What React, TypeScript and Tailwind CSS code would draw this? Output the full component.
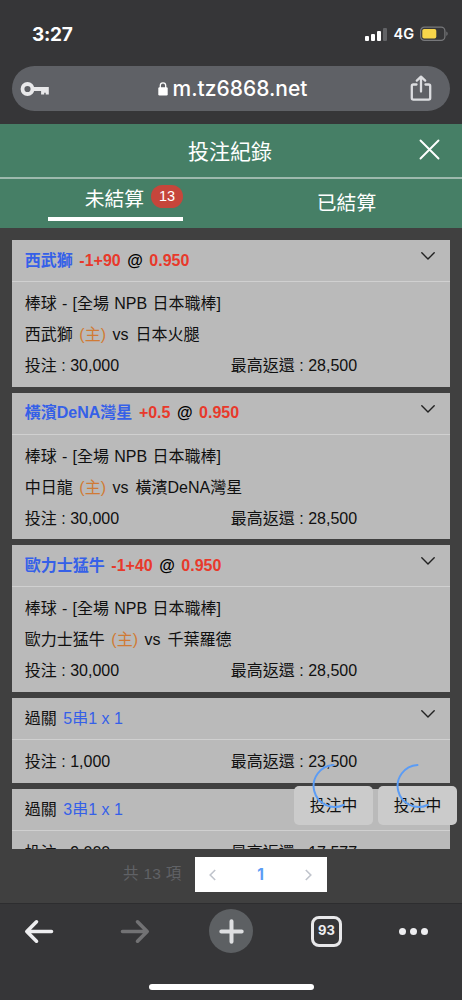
import type { ReactNode } from 'react';

type Bet = {
  id: number;
  team?: string;
  handicap?: string;
  odds?: string;
  parlay?: string;
  league?: string;
  home?: string;
  away?: string;
  stake: string;
  payout: string;
};

const bets: Bet[] = [
  {
    id: 1,
    team: '西武獅',
    handicap: '-1+90',
    odds: '0.950',
    league: '棒球 - [全場 NPB 日本職棒]',
    home: '西武獅',
    away: '日本火腿',
    stake: '30,000',
    payout: '28,500',
  },
  {
    id: 2,
    team: '橫濱DeNA灣星',
    handicap: '+0.5',
    odds: '0.950',
    league: '棒球 - [全場 NPB 日本職棒]',
    home: '中日龍',
    away: '橫濱DeNA灣星',
    stake: '30,000',
    payout: '28,500',
  },
  {
    id: 3,
    team: '歐力士猛牛',
    handicap: '-1+40',
    odds: '0.950',
    league: '棒球 - [全場 NPB 日本職棒]',
    home: '歐力士猛牛',
    away: '千葉羅德',
    stake: '30,000',
    payout: '28,500',
  },
  { id: 4, parlay: '5串1 x 1', stake: '1,000', payout: '23,500' },
  { id: 5, parlay: '3串1 x 1', stake: '9,000', payout: '17,577' },
];

function StatusBar() {
  return (
    <div className="flex h-[66px] items-center justify-between pl-8 pr-[14px] pt-[2px] text-white">
      <span className="font-['Inter'] text-[19px] font-bold leading-none tracking-[-0.3px]">3:27</span>
      <div className="flex items-center">
        <div className="mr-[6px] flex h-[14px] items-end gap-[2px]">
          <span className="h-[5px] w-[4px] rounded-[1px] bg-white" />
          <span className="h-[7px] w-[4px] rounded-[1px] bg-white" />
          <span className="h-[10px] w-[4px] rounded-[1px] bg-white" />
          <span className="h-[13px] w-[4px] rounded-[1px] bg-[#626366]" />
        </div>
        <span className="mr-[6px] font-['Inter'] text-[14.5px] font-semibold leading-none">4G</span>
        <svg width="28" height="16" viewBox="0 0 28 16" fill="none">
          <rect x="0.6" y="1.1" width="24.3" height="13.3" rx="3.8" stroke="#77787b" strokeWidth="1.2" />
          <rect x="2.3" y="2.9" width="14" height="9.6" rx="1.8" fill="#f7d54a" />
          <path d="M26.4 5.6c1.6.7 1.6 3.6 0 4.4z" fill="#77787b" />
        </svg>
      </div>
    </div>
  );
}

function AddressBar() {
  return (
    <div className="mx-3 flex h-[45px] items-center rounded-full bg-[#5f6166] pl-[8px] pr-[18px]">
      <svg width="30" height="16" viewBox="0 0 30 16" fill="none">
        <circle cx="7.5" cy="8" r="5" stroke="#e8e8ea" strokeWidth="3.8" />
        <path d="M13 6.1h15.8v7.5h-3.1v-1.8h-1.5v1.6h-3.1V9.9H13z" fill="#e8e8ea" />
      </svg>
      <div className="flex flex-1 items-center justify-center pl-[5px]">
        <svg className="mr-[5px]" width="10" height="14" viewBox="0 0 10 14" fill="none">
          <rect x="0.3" y="5.2" width="9.4" height="8.2" rx="1.2" fill="#fff" />
          <path d="M2.3 6V3.6a2.7 2.7 0 0 1 5.4 0V6" stroke="#fff" strokeWidth="1.3" />
        </svg>
        <span className="font-['Inter'] text-[21px] font-medium leading-none text-white">m.tz6868.net</span>
      </div>
      <svg width="22" height="27" viewBox="0 0 22 27" fill="none" stroke="#dcdde0" strokeWidth="2.3" strokeLinecap="round" strokeLinejoin="round">
        <path d="M6.5 9.5H3.4a1.6 1.6 0 0 0-1.6 1.6v12a1.6 1.6 0 0 0 1.6 1.6h15.2a1.6 1.6 0 0 0 1.6-1.6v-12a1.6 1.6 0 0 0-1.6-1.6h-3.1" />
        <path d="M11 16.5V2M6.8 5.6 11 1.6l4.2 4" />
      </svg>
    </div>
  );
}

function Header() {
  return (
    <header className="bg-[#467f66] text-white">
      <div className="relative flex h-[53px] items-center justify-center pr-[2px] pt-[2px] text-[21px]">
        投注紀錄
        <svg className="absolute right-[22px] top-[15px]" width="21" height="21" viewBox="0 0 21 21" stroke="#fff" strokeWidth="1.9" strokeLinecap="round">
          <path d="M1.5 1.5 19.5 19.5M19.5 1.5 1.5 19.5" />
        </svg>
      </div>
      <div className="h-[2px] bg-[#9db9ad]" />
      <div className="flex h-[49px]">
        <div className="flex flex-1 justify-center">
          <div className="flex h-[42px] w-[135px] justify-end border-b-[4px] border-white">
            <span className="mr-[7px] mt-[5px] text-[19.8px] leading-[30px]">未結算</span>
            <span className="mt-[6px] flex h-[23px] w-[32px] items-center justify-center rounded-full bg-[#c6463b] text-[14.5px]">13</span>
          </div>
        </div>
        <div className="flex flex-1 justify-center pt-[9px] text-[19.8px] leading-[30px]">已結算</div>
      </div>
    </header>
  );
}

function Row({ children }: { children: ReactNode }) {
  return <div className="flex h-[31px] items-center whitespace-pre">{children}</div>;
}

function BetCard({ bet }: { bet: Bet }) {
  return (
    <div className="shrink-0 bg-[#bababa] text-[16px] text-[#101010]">
      <div className="flex h-[42px] items-center justify-between border-b-[1.5px] border-[#d0d0d0] pl-[12.5px] pr-[15px]">
        {bet.parlay ? (
          <div className="flex gap-[6.5px]">
            <span>過關</span>
            <span className="text-[#3560e8]">{bet.parlay}</span>
          </div>
        ) : (
          <div className="flex gap-[6.5px] font-bold">
            <span className="text-[#3560e8]">{bet.team}</span>
            <span className="text-[#e8392b]">{bet.handicap}</span>
            <span className="text-black">@</span>
            <span className="text-[#e8392b]">{bet.odds}</span>
          </div>
        )}
        <svg className="mb-[9px]" width="14" height="8" viewBox="0 0 14 8" fill="none" stroke="#222" strokeWidth="1.4" strokeLinecap="round" strokeLinejoin="round">
          <path d="m.8.8 6.2 6.2L13.2.8" />
        </svg>
      </div>
      <div className={bet.parlay ? 'h-[43px] px-[12.5px] pt-[6px]' : 'h-[104.7px] px-[12.5px] pt-[6.5px]'}>
        {bet.league && (
          <>
            <Row>
              <span className="[word-spacing:0.8px]">{bet.league}</span>
            </Row>
            <Row>
              <span>{bet.home}</span>
              <span className="mx-[6.5px] text-[#d07a35]">(主)</span>
              <span className="mr-[7px]">vs</span>
              <span>{bet.away}</span>
            </Row>
          </>
        )}
        <Row>
          <span className="w-[206px]">投注 : {bet.stake}</span>
          <span>最高返還 : {bet.payout}</span>
        </Row>
      </div>
    </div>
  );
}

function PendingToast() {
  return (
    <div className="relative flex h-[39px] w-[79px] items-center justify-center rounded-[5px] bg-[#cbcbcb] text-[15.8px] text-[#101010]">
      投注中
      <svg className="absolute left-[17px] top-[-23px]" width="44" height="46" viewBox="0 0 44 46" fill="none" stroke="#5b9cf5" strokeWidth="2" strokeLinecap="round">
        <path d="M22.5 2A21 21 0 1 0 32.5 42" />
      </svg>
    </div>
  );
}

function Pagination() {
  return (
    <div className="flex h-[54px] items-start pt-2">
      <span className="ml-[123px] w-[72px] text-[15.5px] leading-[34px] tracking-[0.3px] text-[#606266]">共 13 項</span>
      <div className="flex h-[35px] w-[132px] items-center justify-between bg-white px-[14px]">
        <svg width="7" height="12" viewBox="0 0 7 12" fill="none" stroke="#c0c4cc" strokeWidth="1.6">
          <path d="M6.2 1 1.2 6l5 5" />
        </svg>
        <span className="font-['Inter'] text-[15.5px] font-bold text-[#5b9cf5]">1</span>
        <svg className="mr-[1px]" width="7" height="12" viewBox="0 0 7 12" fill="none" stroke="#c0c4cc" strokeWidth="1.6">
          <path d="m.8 1 5 5-5 5" />
        </svg>
      </div>
    </div>
  );
}

function BrowserToolbar() {
  return (
    <div className="h-[97px] border-t border-[#2d2d2f] bg-[#363638]">
      <div className="flex h-[54px] items-center">
        <svg className="ml-[24px]" width="30" height="25" viewBox="0 0 30 25" fill="none" stroke="#eeeef0" strokeWidth="3.6" strokeLinecap="round" strokeLinejoin="round">
          <path d="M27.5 12.5H3M12.5 2.8 2.8 12.5l9.7 9.7" />
        </svg>
        <svg className="ml-[66px]" width="30" height="25" viewBox="0 0 30 25" fill="none" stroke="#727274" strokeWidth="3.6" strokeLinecap="round" strokeLinejoin="round">
          <path d="M2.5 12.5H27M17.5 2.8l9.7 9.7-9.7 9.7" />
        </svg>
        <div className="ml-[59px] flex size-[44px] items-center justify-center rounded-full bg-[#5d6063]">
          <svg width="25" height="25" viewBox="0 0 25 25" stroke="#dedfe1" strokeWidth="4" strokeLinecap="round">
            <path d="M12.5 2.3v20.4M2.3 12.5h20.4" />
          </svg>
        </div>
        <div className="ml-[58px] flex size-[31px] items-center justify-center rounded-[8px] border-[3px] border-[#e8e8ea] font-['Inter'] text-[13px] font-bold text-[#eeeef0]">
          93
        </div>
        <div className="ml-[57px] flex gap-[4px]">
          <span className="size-[7px] rounded-full bg-[#eeeef0]" />
          <span className="size-[7px] rounded-full bg-[#eeeef0]" />
          <span className="size-[7px] rounded-full bg-[#eeeef0]" />
        </div>
      </div>
      <div className="mx-auto mt-[26px] h-[6px] w-[165px] rounded-full bg-white" />
    </div>
  );
}

export default function App() {
  return (
    <div className="flex h-[1000px] w-[462px] flex-col overflow-hidden bg-[#404040] font-['Liberation_Sans','Noto_Sans_CJK_TC',sans-serif]">
      <div className="h-[124px] shrink-0 bg-[#363638]">
        <StatusBar />
        <AddressBar />
      </div>
      <Header />
      <main className="relative h-[621px] shrink-0 px-[12.3px] pt-3">
        <div className="flex h-full flex-col gap-[6px] overflow-hidden">
          {bets.map((bet) => (
            <BetCard key={bet.id} bet={bet} />
          ))}
        </div>
        {/* Pending bets float over the list */}
        <div className="absolute right-[5px] top-[558px] flex gap-[5px]">
          <PendingToast />
          <PendingToast />
        </div>
      </main>
      <Pagination />
      <BrowserToolbar />
    </div>
  );
}
